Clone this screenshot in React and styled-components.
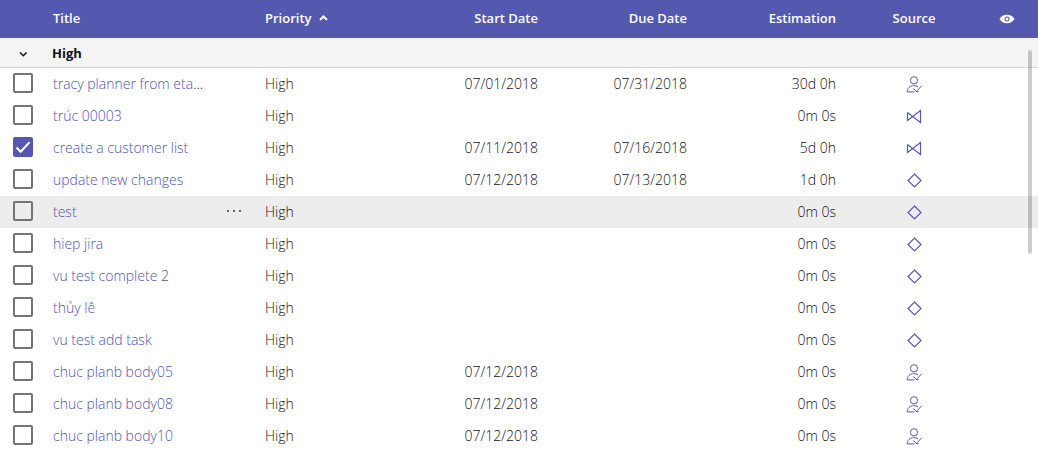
import React, { useState } from 'react';
import styled, { createGlobalStyle, css } from 'styled-components';

const brand = '#5558af';

const GlobalStyle = createGlobalStyle`
  body {
    margin: 0;
    background: #fff;
    color: #111;
    font-family: "Open Sans", "Noto Sans", sans-serif;
    font-size: 14px;
    font-weight: 340;
  }
`;

const Panel = styled.main`
  position: relative;
  height: 100vh;
  overflow: hidden;
`;

const Table = styled.table`
  width: 100%;
  table-layout: fixed;
  border-collapse: separate;
  border-spacing: 0;
`;

const Col = styled.col`
  width: ${(p) => p.$width};
`;

const alignment = css`
  text-align: ${(p) => p.$align || 'left'};
`;

const HeaderCell = styled.th`
  ${alignment}
  box-sizing: border-box;
  height: 38px;
  padding: 0 8px 2px;
  background: ${brand};
  color: #fff;
  font-size: 13px;
  font-weight: 650;
  line-height: 20px;
  white-space: nowrap;
`;

const ColumnsHeaderCell = styled(HeaderCell)`
  padding: 0 15px 4px;
`;

const Cell = styled.td`
  ${alignment}
  box-sizing: border-box;
  height: 32px;
  padding: 0 8px;
  line-height: 20px;
  white-space: nowrap;
`;

const CheckCell = styled(Cell)`
  padding: 0 12px 2px 13px;
`;

const SourceCell = styled(Cell)`
  padding: 0 8px 2px;
`;

const Row = styled.tr`
  background: ${(p) => (p.$active ? '#ededed' : '#fff')};
`;

const GroupCell = styled.th`
  box-sizing: border-box;
  height: 30px;
  padding: ${(p) => (p.$toggle ? '0 0 0 15px' : '0 7px')};
  background: #f4f4f4;
  border-bottom: 1px solid #d5d5d5;
  font-size: 13px;
  font-weight: 700;
  line-height: 20px;
  text-align: left;
`;

const PlainButton = styled.button`
  display: inline-flex;
  align-items: center;
  gap: 7px;
  padding: 0;
  border: 0;
  background: none;
  color: inherit;
  font: inherit;
  cursor: pointer;
  vertical-align: middle;
`;

const SortButton = styled(PlainButton)`
  vertical-align: baseline;
`;

const TitleLayout = styled.div`
  display: flex;
  align-items: center;
  justify-content: space-between;
  padding-right: 6px;
`;

const TaskLink = styled.a`
  color: #5053ad;
  text-decoration: none;
`;

const Checkbox = styled.input`
  appearance: none;
  display: block;
  box-sizing: border-box;
  width: 20px;
  height: 20px;
  margin: 0;
  border: 2px solid #747474;
  border-radius: 2px;
  cursor: pointer;

  &:checked {
    border-color: ${brand};
    background: ${brand};
  }
`;

const CheckboxFrame = styled.label`
  display: grid;
  width: 20px;

  & > * {
    grid-area: 1 / 1;
  }

  & > svg {
    pointer-events: none;
  }
`;

const Icon = styled.svg`
  display: inline-block;
  vertical-align: middle;
  fill: none;
  stroke: ${(p) => p.$color || 'currentColor'};
  stroke-width: ${(p) => p.$weight || 1};
`;

const ScrollThumb = styled.div`
  position: absolute;
  top: 50px;
  right: 6px;
  width: 4px;
  height: 45%;
  border-radius: 2px;
  background: rgba(0, 0, 0, 0.2);
`;

const Tick = () => (
  <Icon width="20" height="20" viewBox="0 0 20 20" $color="#fff" $weight={2} aria-hidden="true">
    <path d="M3.5 10.5 7.7 14.7 16.5 5.3" />
  </Icon>
);

const ChevronUp = () => (
  <Icon width="9" height="6" viewBox="0 0 9 6" $weight={2} aria-hidden="true">
    <path d="M1 5 4.5 1.5 8 5" />
  </Icon>
);

const ChevronDown = () => (
  <Icon width="16" height="16" viewBox="0 0 16 16" $weight={1.5} aria-hidden="true">
    <path d="M5 6.5 8.3 9.8 11.6 6.5" />
  </Icon>
);

const Eye = () => (
  <Icon width="16" height="10" viewBox="0 0 16 10" $color="none" aria-hidden="true">
    <path
      fill="#fff"
      fillRule="evenodd"
      d="M.5 5C2.2 2.2 4.8.8 8 .8S13.8 2.2 15.5 5C13.8 7.8 11.2 9.2 8 9.2S2.2 7.8.5 5ZM8 2.5a2.5 2.5 0 1 0 0 5 2.5 2.5 0 0 0 0-5Z"
    />
    <circle cx="8" cy="5" r="1.5" fill="#fff" />
  </Icon>
);

const More = () => (
  <Icon width="18" height="16" viewBox="0 0 18 16" $color="none" aria-hidden="true">
    <g fill="#333">
      <circle cx="3" cy="7" r="1" />
      <circle cx="9" cy="7" r="1" />
      <circle cx="15" cy="7" r="1" />
    </g>
  </Icon>
);

const sourceShapes = {
  planner: (
    <g strokeWidth="1">
      <circle cx="8" cy="4.3" r="3.6" />
      <path d="M12 10.8C10.8 10 9.4 9.6 7.8 9.6 4 9.6 1.3 12.2 1.1 15.9H8.3M7.3 12.4 10.3 15.6 15.7 9.8M10.3 15.6H12.6" />
    </g>
  ),
  studio: <path d="M1.5 4.5V12.5L14.5 2.5V14.5L1.5 4.5" />,
  jira: <path d="M8.5 2 15 8.5 8.5 15 2 8.5Z" />,
};

const SourceIcon = ({ type }) => (
  <Icon width="16" height="17" viewBox="0 0 16 17" $color={brand} $weight={1.2} role="img" aria-label={type}>
    {sourceShapes[type]}
  </Icon>
);

const columnWidths = ['45px', 'auto', '140px', '149px', '149px', '149px', '140px', '54px'];

const tasks = [
  { title: 'tracy planner from eta', clipped: true, start: '07/01/2018', due: '07/31/2018', estimation: '30d 0h', source: 'planner' },
  { title: 'trúc 00003', estimation: '0m 0s', source: 'studio' },
  { title: 'create a customer list', start: '07/11/2018', due: '07/16/2018', estimation: '5d 0h', source: 'studio', done: true },
  { title: 'update new changes', start: '07/12/2018', due: '07/13/2018', estimation: '1d 0h', source: 'jira' },
  { title: 'test', estimation: '0m 0s', source: 'jira', active: true },
  { title: 'hiep jira', estimation: '0m 0s', source: 'jira' },
  { title: 'vu test complete 2', estimation: '0m 0s', source: 'jira' },
  { title: 'thủy lê', estimation: '0m 0s', source: 'jira' },
  { title: 'vu test add task', estimation: '0m 0s', source: 'jira' },
  { title: 'chuc planb body05', start: '07/12/2018', estimation: '0m 0s', source: 'planner' },
  { title: 'chuc planb body08', start: '07/12/2018', estimation: '0m 0s', source: 'planner' },
  { title: 'chuc planb body10', start: '07/12/2018', estimation: '0m 0s', source: 'planner' },
];

function TaskRow({ task }) {
  const [done, setDone] = useState(Boolean(task.done));
  return (
    <Row $active={task.active}>
      <CheckCell>
        <CheckboxFrame>
          <Checkbox
            type="checkbox"
            checked={done}
            onChange={(e) => setDone(e.target.checked)}
            aria-label={task.title}
          />
          {done && <Tick />}
        </CheckboxFrame>
      </CheckCell>
      <Cell>
        <TitleLayout>
          <span>
            <TaskLink href="#">{task.title}</TaskLink>
            {task.clipped && '...'}
          </span>
          {task.active && (
            <PlainButton type="button" aria-label="More actions">
              <More />
            </PlainButton>
          )}
        </TitleLayout>
      </Cell>
      <Cell>High</Cell>
      <Cell $align="right">{task.start}</Cell>
      <Cell $align="right">{task.due}</Cell>
      <Cell $align="right">{task.estimation}</Cell>
      <SourceCell $align="center">
        <SourceIcon type={task.source} />
      </SourceCell>
      <Cell />
    </Row>
  );
}

export default function App() {
  return (
    <>
      <GlobalStyle />
      <Panel>
        <Table>
          <colgroup>
            {columnWidths.map((width, i) => (
              <Col key={i} $width={width} />
            ))}
          </colgroup>
          <thead>
            <tr>
              <HeaderCell />
              <HeaderCell>Title</HeaderCell>
              <HeaderCell>
                <SortButton type="button">
                  Priority <ChevronUp />
                </SortButton>
              </HeaderCell>
              <HeaderCell $align="right">Start Date</HeaderCell>
              <HeaderCell $align="right">Due Date</HeaderCell>
              <HeaderCell $align="right">Estimation</HeaderCell>
              <HeaderCell $align="center">Source</HeaderCell>
              <ColumnsHeaderCell>
                <PlainButton type="button" aria-label="Visible columns">
                  <Eye />
                </PlainButton>
              </ColumnsHeaderCell>
            </tr>
          </thead>
          <tbody>
            <tr>
              <GroupCell $toggle>
                <PlainButton type="button" aria-label="Collapse group">
                  <ChevronDown />
                </PlainButton>
              </GroupCell>
              <GroupCell colSpan={7}>High</GroupCell>
            </tr>
            {tasks.map((task) => (
              <TaskRow key={task.title} task={task} />
            ))}
          </tbody>
        </Table>
        <ScrollThumb />
      </Panel>
    </>
  );
}
